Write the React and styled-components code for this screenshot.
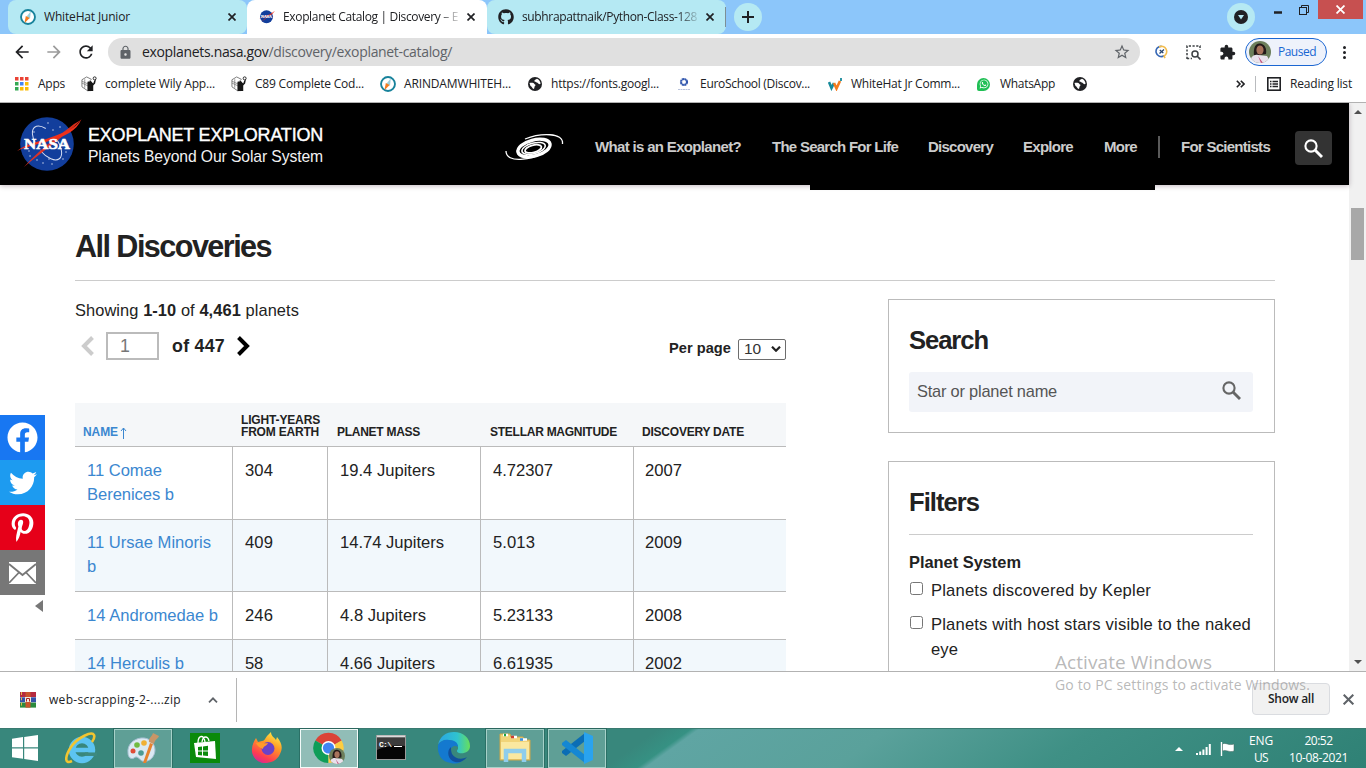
import React, { useLayoutEffect, useRef } from "react";
import styled, { createGlobalStyle, css } from "styled-components";
import { FaGithub, FaFacebook, FaTwitter, FaPinterestP, FaWhatsapp } from "react-icons/fa";
import { MdExtension, MdLock, MdRefresh, MdStarBorder, MdArrowBack, MdArrowForward } from "react-icons/md";

const ui = `"Open Sans", "Noto Sans", sans-serif`;
const arial = `"Liberation Sans", Arial, sans-serif`;

const Global = createGlobalStyle`
  *, *::before, *::after { box-sizing: border-box; }
  html, body { margin: 0; height: 768px; overflow: hidden; background: #fff; }
  h1, h2, h3, p { margin: 0; }
  svg { display: block; flex: none; }
`;

/* Text whose tracking is adjusted so that it spans a given width. */
const FitSpan = styled.span`
  display: inline-block;
  width: max-content;
  white-space: pre;
  flex: none;
`;
function Fit({ w, children }) {
  const ref = useRef(null);
  useLayoutEffect(() => {
    const el = ref.current;
    el.style.letterSpacing = "0px";
    const natural = el.getBoundingClientRect().width;
    const n = el.textContent.length;
    el.style.letterSpacing = `${(w - natural) / n}px`;
  }, [w, children]);
  return <FitSpan ref={ref}>{children}</FitSpan>;
}

const Screen = styled.div`
  width: 1366px;
  height: 768px;
  display: flex;
  flex-direction: column;
  overflow: hidden;
  position: relative;
  font: 12px/16px ${ui};
  color: #202124;
`;

/* ---------- tab strip ---------- */
const TabStrip = styled.div`
  height: 34px;
  flex: none;
  display: flex;
  background: #8cc6fa;
  padding-left: 8px;
`;
const Tab = styled.div`
  width: ${(p) => p.$w}px;
  height: 34px;
  border-radius: 8px 8px ${(p) => (p.$active ? "0 0" : "8px 8px")};
  background: ${(p) => (p.$active ? "#fff" : "#b5e9f3")};
  display: flex;
  align-items: center;
  padding: 0 10px 1px ${(p) => p.$pad || 12}px;
  gap: 8px;
`;
const TabTitle = styled.div`
  width: 176px;
  flex: none;
  overflow: hidden;
  white-space: nowrap;
  ${(p) => p.$fade && css`
    mask-image: linear-gradient(90deg, #000 155px, rgba(0, 0, 0, 0.15) 176px);
  `}
`;
const TabEnd = styled.div`
  width: 1px;
  height: 20px;
  margin: 7px 8px 0 -1px;
  background: #7d8f96;
`;
const RoundButton = styled.div`
  width: 28px;
  height: 28px;
  border-radius: 50%;
  margin-top: 3px;
  background: #b5e9f3;
  display: grid;
  place-items: center;
`;
const WindowButtons = styled.div`
  display: flex;
  margin-left: auto;
  padding-right: 3px;
`;
const WinButton = styled.div`
  width: ${(p) => p.$w}px;
  height: 19px;
  background: ${(p) => (p.$close ? "#c75050" : "transparent")};
  display: flex;
  align-items: center;
  justify-content: center;
  padding-right: ${(p) => p.$inset || 0}px;
`;

/* ---------- toolbar ---------- */
const Toolbar = styled.div`
  height: 36px;
  flex: none;
  display: flex;
  align-items: center;
  padding: 0 15px 0 12px;
  color: #202124;
`;
const NavIcons = styled.div`
  display: flex;
  gap: 12px;
  width: 96px;
`;
const Omnibox = styled.div`
  width: 1032px;
  height: 28px;
  border-radius: 14px;
  background: #e0e0e0;
  display: flex;
  align-items: center;
  padding: 0 9px 0 10px;
  color: #5f6368;
  font-size: 14px;
  b { font-weight: 400; color: #202124; }
`;
const Url = styled.div`
  margin-left: 9px;
  flex: 1;
`;
const Extensions = styled.div`
  display: flex;
  align-items: center;
  gap: 18px;
  margin: 0 9px 0 15px;
`;
const Profile = styled.div`
  width: 82px;
  height: 28px;
  border: 1px solid #1b66d2;
  border-radius: 14px;
  background: #eef2fb;
  display: flex;
  align-items: center;
  gap: 7px;
  padding-left: 3px;
  color: #1967d2;
`;
const Kebab = styled.div`
  margin-left: auto;
  display: flex;
  flex-direction: column;
  gap: 2px;
  padding-right: 5px;
  i { width: 3px; height: 3px; border-radius: 50%; background: #202124; }
`;

/* ---------- bookmarks ---------- */
const Bookmarks = styled.div`
  height: 33px;
  flex: none;
  border-bottom: 1px solid #b2b2b2;
  padding: 0 14px 4px 15px;
  display: flex;
  align-items: center;
`;
const Bookmark = styled.div`
  width: ${(p) => p.$w}px;
  flex: none;
  display: flex;
  align-items: center;
  gap: ${(p) => p.$gap || 8}px;
`;
const ReadingList = styled.div`
  margin-left: auto;
  display: flex;
  align-items: center;
  gap: 8px;
`;
const ReadingLabel = styled.div`
  margin-left: 1px;
`;
const Divider = styled.div`
  width: 1px;
  height: 16px;
  margin: 0 3px 0 2px;
  background: #b9bbbe;
`;

/* ---------- page ---------- */
const Viewport = styled.div`
  height: 568px;
  flex: none;
  display: flex;
  position: relative;
  overflow: hidden;
  font-family: ${arial};
`;
const Page = styled.div`
  width: 1349px;
  color: #222;
`;
const Header = styled.header`
  height: 82px;
  background: #000;
  position: relative;
  display: flex;
  align-items: center;
  padding-left: 16px;
  box-shadow: 0 1px 5px rgba(40, 0, 30, 0.28);
`;
const MenuEdge = styled.div`
  position: absolute;
  left: 810px;
  top: 82px;
  width: 345px;
  height: 5px;
  background: #000;
`;
const BrandLogo = styled.div`
  padding-bottom: 2px;
`;
const Brand = styled.div`
  margin-left: 6px;
  padding-top: 3px;
  width: 417px;
  color: #fff;
`;
const BrandTitle = styled.div`
  font-size: 18px;
  line-height: 21px;
  -webkit-text-stroke: 0.4px #fff;
`;
const BrandSub = styled.div`
  font-size: 15.7px;
  line-height: 21px;
  color: #f2f2f2;
`;
const Nav = styled.nav`
  display: grid;
  grid-template-columns: 177px 156px 95px 81px 54px 23px 114px 37px;
  align-items: center;
  margin-left: 30px;
  padding-top: 6px;
  font: bold 15px/20px ${arial};
  color: #ccc;
`;
const NavLine = styled.div`
  width: 2px;
  height: 22px;
  background: #5a5a5a;
`;
const NavSearch = styled.div`
  height: 34px;
  margin-top: 2px;
  border-radius: 4px;
  background: #333;
  display: grid;
  place-items: center;
`;
const GalaxyMark = styled.div`
  padding-top: 8px;
`;
const Content = styled.main`
  padding: 41px 74px 0 75px;
`;
const Heading = styled.h1`
  font: bold 30.6px/40px ${arial};
  height: 55px;
  border-bottom: 1px solid #ccc;
`;
const Columns = styled.div`
  display: flex;
  justify-content: space-between;
  padding-top: 18px;
`;
const Main = styled.section`
  width: 711px;
`;
const Showing = styled.p`
  font-size: 16.4px;
  line-height: 22px;
`;
const Pager = styled.div`
  display: flex;
  align-items: center;
  height: 30px;
  margin-top: 10px;
  padding-left: 6px;
  font: bold 17.8px/24px ${arial};
`;
const PageInput = styled.div`
  width: 53px;
  height: 28px;
  border: 2px solid #bbb;
  margin: 0 13px 0 12px;
  padding-left: 12px;
  font-weight: 400;
  color: #777;
`;
const NextIcon = styled.div`
  margin-left: 12px;
`;
const PerPage = styled.div`
  margin: 5px 0 0 auto;
  display: flex;
  gap: 7px;
  font-size: 14.6px;
  line-height: 20px;
`;
const Select = styled.div`
  width: 48px;
  height: 21px;
  margin-top: 1px;
  border: 1px solid #6d6d6d;
  border-radius: 2px;
  display: flex;
  align-items: center;
  padding-left: 5px;
  gap: 10px;
  font-weight: 400;
  font-size: 15.5px;
  color: #333;
`;
const Table = styled.div`
  margin-top: 42px;
  display: grid;
  grid-template-columns: 158px 95px 153px 153px 152px;
`;
const HeadCell = styled.div`
  height: 44px;
  padding: 0 0 8px ${(p) => p.$pad || 8}px;
  background: #f5f7f9;
  border-bottom: 1px solid #bbb;
  display: flex;
  flex-direction: column;
  justify-content: flex-end;
  font: bold 12px/12px ${arial};
  color: ${(p) => (p.$sorted ? "#3b87d0" : "#222")};
`;
const Sorted = styled.div`
  display: flex;
  gap: 2px;
  height: 12px;
`;
const Cell = styled.div`
  height: ${(p) => p.$h}px;
  padding: ${(p) => p.$top}px 0 0 ${(p) => p.$pad || 12}px;
  background: ${(p) => (p.$alt ? "#f2f8fc" : "#fff")};
  border-bottom: 1px solid #bbb;
  border-right: ${(p) => (p.$last ? "0" : "1px solid #bbb")};
  color: ${(p) => (p.$link ? "#3b87d0" : "#222")};
  font-size: 16.6px;
  line-height: 24px;
`;
const Aside = styled.aside`
  width: 387px;
`;
const Card = styled.section`
  height: ${(p) => p.$h}px;
  border: 1px solid #bbb;
  padding: 20px 21px 0 20px;
  margin-bottom: 28px;
`;
const CardTitle = styled.h2`
  font: bold 25.6px/40px ${arial};
`;
const SearchField = styled.div`
  margin-top: 12px;
  height: 40px;
  border-radius: 3px;
  background: #f2f4f9;
  display: flex;
  align-items: center;
  justify-content: space-between;
  padding: 0 12px 2px 8px;
  font-size: 16.4px;
  line-height: 24px;
  color: #555;
`;
const SearchIcon = styled.div`
  padding-bottom: 1px;
`;
const FilterGroup = styled.h3`
  border-top: 1px solid #ccc;
  margin-top: 12px;
  padding: 15px 0 1px;
  font: bold 16.4px/24px ${arial};
`;
const FilterRow = styled.div`
  display: flex;
  gap: 8px;
  padding: 3px 0 6px 1px;
  font-size: 16.6px;
  line-height: 25px;
`;
const Checkbox = styled.div`
  width: 13px;
  height: 13px;
  margin-top: 4px;
  border: 1px solid #767676;
  border-radius: 2.5px;
`;
const Lines = styled.div`
  display: flex;
  flex-direction: column;
  align-items: flex-start;
`;
const Share = styled.div`
  position: absolute;
  left: 0;
  top: 312px;
  width: 45px;
  display: flex;
  flex-direction: column;
`;
const ShareButton = styled.div`
  height: 45px;
  background: ${(p) => p.$bg};
  color: #fff;
  display: grid;
  place-items: center;
`;
const ShareToggle = styled.div`
  width: 0;
  margin: 5px 2px 0 auto;
  border: 6px solid transparent;
  border-left-width: 0;
  border-right: 8px solid #777;
`;
const Scrollbar = styled.div`
  width: 17px;
  background: #f1f1f1;
  display: flex;
  flex-direction: column;
  align-items: center;
  padding: 7px 0;
`;
const Arrow = styled.div`
  border: 4px solid transparent;
  border-${(p) => (p.$up ? "bottom" : "top")}-color: #505050;
  border-${(p) => (p.$up ? "top" : "bottom")}-width: 0;
`;
const Thumb = styled.div`
  width: 13px;
  height: 52px;
  margin: 94px 0 auto;
  background: #a8a8a8;
`;

/* ---------- download shelf ---------- */
const Shelf = styled.div`
  height: 57px;
  flex: none;
  border-top: 1px solid #b2b2b2;
  display: flex;
  align-items: center;
  padding: 0 12px 0 20px;
  background: #fff;
`;
const ShelfItem = styled.div`
  width: 217px;
  height: 44px;
  border-right: 1px solid #b5b5b5;
  display: flex;
  align-items: center;
  padding-right: 18px;
`;
const FileName = styled.div`
  margin: 0 auto 0 13px;
`;
const ShowAll = styled.div`
  width: 78px;
  height: 32px;
  margin: -2px 13px 0 auto;
  border: 1px solid #dadce0;
  border-radius: 4px;
  background: #f1f1f1;
  text-align: center;
  line-height: 30px;
  font-weight: 600;
`;
const ShelfClose = styled.div`
  padding-bottom: 2px;
`;
const Watermark = styled.div`
  position: absolute;
  left: 1055px;
  top: 650px;
  color: rgba(140, 140, 140, 0.62);
  font-size: 19px;
  line-height: 24px;
`;
const WatermarkSub = styled.div`
  font-size: 14px;
  line-height: 22px;
`;

/* ---------- taskbar ---------- */
const Taskbar = styled.div`
  height: 40px;
  flex: none;
  display: flex;
  border-top: 1px solid #3a7a70;
  background:
    linear-gradient(144.2deg, #38877c 0 385px, #369183 404px, #5fa5a3 409px, #5aa19b 520px, #3f9085 640px, #2f8175 100%);
`;
const Start = styled.div`
  width: 50px;
  display: grid;
  place-items: center;
  padding-bottom: 2px;
`;
const Task = styled.div`
  width: 58px;
  height: 39px;
  margin: 0 2px;
  padding-bottom: 2px;
  display: grid;
  place-items: center;
  ${(p) => p.$open && css`
    border: 1px solid rgba(190, 225, 218, 0.75);
    box-shadow: 0 0 0 1px rgba(20, 70, 62, 0.35);
    background: rgba(255, 255, 255, ${p.$open === "front" ? 0.45 : 0.2});
  `}
  ${(p) => p.$open === "front" && css`border-color: #f2faf8;`}
`;
const Tray = styled.div`
  margin-left: auto;
  padding-right: 18px;
  display: flex;
  align-items: center;
  color: #fff;
`;
const TrayText = styled.div`
  display: flex;
  flex-direction: column;
  align-items: center;
  margin-left: ${(p) => p.$ml}px;
  line-height: 17px;
`;

/* ---------- drawings ---------- */
const Cross = ({ s = 8, c = "#202124", w = 1.7 }) => (
  <svg width={s} height={s} viewBox="0 0 8 8" stroke={c} strokeWidth={w}><path d="M.5.5l7 7M7.5.5l-7 7" /></svg>
);
const WhiteHat = () => (
  <svg width="16" height="16" viewBox="0 0 17 17">
    <circle cx="8.5" cy="8.5" r="7.4" fill="#fff" stroke="#17829b" strokeWidth="2" />
    <path d="M11.500 2.500 7 8l1.500 2.500 2.200-.8z" fill="#9fd0dc" />
    <path d="M6.200 7.500l4 2L5 15l.3-3z" fill="#f57c1f" />
  </svg>
);
const Meatball = ({ w = 66, h = 56, small }) => (
  <svg width={w} height={h} viewBox="0 0 66 56">
    <circle cx="31" cy="29" r="26.8" fill="#123e9c" />
    {!small && (
      <g>
        <ellipse cx="31" cy="28" rx="10" ry="20" transform="rotate(-38 31 28)" fill="none" stroke="#d5ddf2" strokeWidth="1" strokeDasharray="46 8 30 60" />
        {[[32, 8], [44, 12], [37, 15], [14, 41], [21, 45], [27, 48], [13, 36], [33, 44], [47, 44], [36, 49], [50, 37], [18, 17]].map(([x, y]) => (
          <circle key={`${x}-${y}`} cx={x} cy={y} r=".7" fill="#dfe6f7" />
        ))}
      </g>
    )}
    <path d="M65.500 4C60 17 49 21 33 26 20 30 9 32 1 36c9-7 21-9 32-13C49 17 58 15 65.500 4z" fill="#f0311b" />
    <path d="M65 5C48 22 27 36 8 52c15-17 33-30 50-43z" fill="#f0311b" opacity=".9" />
    <text x="8" y="34" textLength="46" lengthAdjust="spacingAndGlyphs" fill="#fff" stroke="#fff" strokeWidth=".6" fontFamily="Liberation Serif" fontWeight="700" fontSize="15.500">NASA</text>
  </svg>
);
const Galaxy = () => (
  <svg width="60" height="30" viewBox="0 0 60 30" fill="none" stroke="#fff">
    <g transform="rotate(-15 29 15)">
      <ellipse cx="29" cy="15" rx="16.500" ry="8" strokeWidth="3.400" />
      <ellipse cx="28.500" cy="15.300" rx="12" ry="5.300" strokeWidth="1.500" />
      <ellipse cx="28" cy="15.600" rx="8.500" ry="3.600" strokeWidth="1.800" />
    </g>
    <path d="M1 18c0 13 26 9 39 1" strokeWidth="1.300" />
    <path d="M20 6C35 0 59-1 57.500 11" strokeWidth="1.300" />
  </svg>
);
const Cubes = () => (
  <svg width="16" height="16" viewBox="0 0 17 17">
    <path d="M1 4l5-3 5 2.500-3.500 3.500v9L1 11.500z" fill="#fff" stroke="#777" />
    <path d="M1 7.500l6.500 3M1 5.500l6.500 3M4 3.500v9" stroke="#777" strokeWidth=".8" />
    <path d="M8 8l2-3 3 3 1-3 2-2-1 5-2 2v6H8z" fill="#161616" />
    <path d="M7 6h4v10H7z" fill="#161616" />
    <circle cx="14.500" cy="2.500" r="1.600" fill="none" stroke="#222" />
  </svg>
);
const Globe = () => (
  <svg width="14" height="14" viewBox="0 0 14 14">
    <circle cx="7" cy="7" r="7" fill="#202124" />
    <path d="M1.500 6c2-.5 4.500-.3 5 1.300 1.300.2 1.200 1.500.2 1.900L6 12C4 11.500 4 9.500 2.500 9zM9 1.800C7 3 6 3.300 6.500 4.500c1.500 0 1.500 1 3 1.300.8.700 1.500 1.700 3 1.200C12.500 4.500 11 2.500 9 1.800z" fill="#fff" />
  </svg>
);
const Apps = () => (
  <svg width="14" height="14" viewBox="0 0 14 14">
    {["#ea4335", "#ea4335", "#ea4335", "#34a853", "#4285f4", "#fbbc04", "#34a853", "#fbbc04", "#fbbc04"].map((c, i) => (
      <rect key={i} x={(i % 3) * 5} y={Math.floor(i / 3) * 5} width="3.500" height="3.500" fill={c} />
    ))}
  </svg>
);
const Euro = () => (
  <svg width="14" height="14" viewBox="0 0 14 14">
    <circle cx="7" cy="5" r="3" fill="none" stroke="#2f55ad" strokeWidth="2.200" strokeDasharray="2 .35" />
    <path d="M1 12.500h12" stroke="#b9c3dc" strokeDasharray="2 .5" />
  </svg>
);
const WLogo = () => (
  <svg width="15" height="14" viewBox="0 0 15 14" fill="none" strokeWidth="2.600">
    <path d="M1 5l2.500 6L6 6" stroke="#178a9b" /><path d="M6 6l2.500 5.500L12 4" stroke="#f57c1f" /><path d="M13 1v3" stroke="#178a9b" strokeWidth="1.800" />
  </svg>
);
const WhatsApp = styled.div`
  width: 13px;
  height: 13px;
  border-radius: 50% 50% 50% 15%;
  background: #20bf55;
  color: #fff;
  display: grid;
  place-items: center;
`;
const Compass = () => (
  <svg width="13" height="14" viewBox="0 0 13 14" fill="none">
    <path d="M6.500 1.200a5.200 5.200 0 1 0 2.500 9.600" stroke="#3667b5" strokeWidth="1.600" />
    <path d="M4 2a5.200 5.200 0 1 1 5 9.200l1 2" stroke="#f3bd4e" strokeWidth="1.600" />
    <path d="M4.500 8.500l4.500-4M4.800 5l3.500 3" stroke="#27446e" strokeWidth="1.300" />
  </svg>
);
const Capture = () => (
  <svg width="15" height="15" viewBox="0 0 15 15" fill="none" stroke="#3c4043">
    <path d="M1 14V1h13v4M1 13.500h5" strokeWidth="1.500" strokeDasharray="2.200 1.500" />
    <circle cx="9" cy="9" r="3" strokeWidth="1.500" /><path d="M11 11l3.500 3.500" strokeWidth="1.700" />
  </svg>
);
const Portrait = ({ s = 22 }) => (
  <svg width={s} height={s} viewBox="0 0 22 22">
    <clipPath id={`face${s}`}><circle cx="11" cy="11" r="11" /></clipPath>
    <g clipPath={`url(#face${s})`}>
      <rect width="22" height="22" fill="#6d7f5c" />
      <path d="M5 15C4 6 7 2 11 2.500s7 4 6 10.500z" fill="#241a1a" />
      <ellipse cx="11" cy="9" rx="3.600" ry="4.600" fill="#a8735c" />
      <path d="M1 22c0-6 4-9 8-8l9 1 4 7z" fill="#e9e1ec" />
      <path d="M9 15l5 7h-2z" fill="#c3547c" />
    </g>
  </svg>
);
const ListIcon = () => (
  <svg width="14" height="14" viewBox="0 0 14 14" fill="none" stroke="#202124">
    <rect x=".8" y=".8" width="12.400" height="12.400" strokeWidth="1.600" />
    <path d="M3 4.500h1.500M3 7h1.500M3 9.500h1.500M5.500 4.500h5.500M5.500 7h5.500M5.500 9.500h5.500" strokeWidth="1.300" />
  </svg>
);
const Chevron = ({ left, c }) => (
  <svg width="13" height="20" viewBox="0 0 13 20" fill="none" stroke={c} strokeWidth="4">
    <path d={left ? "M11.500 1.500 3 10l8.500 8.500" : "M1.500 1.500 10 10l-8.500 8.500"} />
  </svg>
);
const Lens = ({ s = 19, c = "#666" }) => (
  <svg width={s} height={s} viewBox="0 0 19 19" fill="none" stroke={c}>
    <circle cx="7" cy="7" r="5.600" strokeWidth="2.100" /><path d="M11 11l7 7" strokeWidth="2.900" />
  </svg>
);
const Mail = () => (
  <svg width="27" height="22" viewBox="0 0 27 22">
    <rect width="27" height="22" fill="#fff" />
    <path d="M0 2l13.500 11L27 2M0 21l9.500-10M27 21l-9.500-10" fill="none" stroke="#777" strokeWidth="1.800" />
  </svg>
);
const Rar = () => (
  <svg width="16" height="16" viewBox="0 0 16 16">
    <rect width="16" height="5" fill="#b52a3f" /><rect y="5.300" width="16" height="5" fill="#3451a8" /><rect y="10.600" width="16" height="5" fill="#2c8b3d" />
    <rect x="5.500" width="5" height="15.600" fill="#c9542b" /><rect x="5" y="5" width="6" height="5" fill="#f3e9dc" />
    <path d="M6.500 9.500V6.500h3v3" stroke="#a22" fill="none" /><path d="M1.500 0v15.600" stroke="#e5b646" strokeDasharray="3 2.300" />
  </svg>
);
const WinLogo = () => (
  <svg width="28" height="26" viewBox="0 0 28 26" fill="#fff">
    <path d="M1 3.700l11-1.600v10.200H1zM13.200 2 27 0v12.300H13.200zM1 13.500h11v10.300L1 22.200zM13.200 13.500H27V26l-13.800-2z" />
  </svg>
);
const IE = () => (
  <svg width="32" height="32" viewBox="0 0 32 32" fill="none">
    <circle cx="17" cy="18" r="10" stroke="#5cc4f2" strokeWidth="6.500" />
    <path d="M10 18h20" stroke="#5cc4f2" strokeWidth="4.500" /><path d="M20 22.200h12" stroke="#3d8a7f" strokeWidth="3.500" />
    <path d="M7 29C-1 33 0 24 6 15 13 5 27-1 29 3c.8 2-.5 5-2 7" stroke="#f2c530" strokeWidth="2.600" />
  </svg>
);
const Paint = () => (
  <svg width="32" height="32" viewBox="0 0 32 32">
    <path d="M14 6C6 7 0 13 1 21c0 4 3 7 6 5 3-3 5 1 8 3 8 2 13-5 13-11S23 5 14 6z" fill="#dbe9f3" stroke="#a5bfd1" />
    <circle cx="6" cy="19" r="2.500" fill="#e04c36" /><circle cx="10" cy="13" r="2.800" fill="#71bb41" /><circle cx="17" cy="11" r="2.800" fill="#f0b035" /><circle cx="14" cy="21" r="2.800" fill="#4d9b94" />
    <path d="M16 31l7-20 3 1-7 19z" fill="#e7832e" /><path d="M22 10c-1-4 3-5 4-9l6 3c-1 3-4 3-5 8z" fill="#c99667" />
  </svg>
);
const Store = () => (
  <svg width="30" height="30" viewBox="0 0 30 30">
    <rect width="30" height="30" fill="#0a8a0a" />
    <path d="M4 10l21-2 1 18-20-2z" fill="#fff" /><path d="M8 10c0-8 6-9 7-1M12 9c1-7 6-6 7-1" fill="none" stroke="#fff" strokeWidth="1.300" />
    <path d="M8 14l4-.5v4H8zM13 13.400l5-.6v4.700h-5zM8 18.500h4v4L8 22zM13 18.500h5V23l-5-.6z" fill="#0a8a0a" />
  </svg>
);
const Firefox = () => (
  <svg width="32" height="32" viewBox="0 0 32 32">
    <defs><linearGradient id="fx" x1=".8" y1="0" x2=".3" y2="1"><stop offset="0" stopColor="#fff14a" /><stop offset=".4" stopColor="#ff9a25" /><stop offset=".8" stopColor="#ff3d50" /><stop offset="1" stopColor="#d92a90" /></linearGradient></defs>
    <path d="M5 6l2 4 4-1c2 0 3-2 5-5l4-4c0 4 3 5 5 8l1-3c5 6 6 11 3 17-3 7-10 9-15 9C6 31 0 24 1 17c0-4 2-8 4-11z" fill="url(#fx)" />
    <circle cx="17" cy="16.500" r="6.500" fill="#6b42c8" /><path d="M5 11c5-1 8 1 12 0-1 3-5 3-5 6-3-1-6-3-7-6z" fill="#ff9b2b" />
  </svg>
);
const Chrome = () => (
  <svg width="33" height="32" viewBox="0 0 33 32">
    <path d="M15.500 16 2.300 8.500A15 15 0 0 1 28.600 8.500z" fill="#db4437" /><path d="M15.500 16 15.500 31A15 15 0 0 1 2.300 8.500z" fill="#0f9d58" /><path d="M15.500 16 28.600 8.500A15 15 0 0 1 15.500 31z" fill="#ffcd40" />
    <circle cx="15.500" cy="16" r="7" fill="#fff" /><circle cx="15.500" cy="16" r="5.600" fill="#4285f4" />
    <g transform="translate(16 16)"><Portrait s={16} /></g>
  </svg>
);
const Cmd = () => (
  <svg width="30" height="25" viewBox="0 0 30 25">
    <rect x=".5" y=".5" width="29" height="24" fill="#050505" stroke="#9a9a9a" /><path d="M1 3h28v8Q14 9 1 15z" fill="#3c3c3c" /><path d="M1 1.500h28" stroke="#dcdcdc" strokeWidth="2" />
    <text x="3" y="12" fontFamily="Liberation Mono" fontSize="8" fontWeight="700" fill="#fff" textLength="13">C:\</text><path d="M18 11.500h8" stroke="#fff" />
  </svg>
);
const Edge = () => (
  <svg width="33" height="33" viewBox="0 0 33 33">
    <defs><linearGradient id="eg"><stop offset="0" stopColor="#2aa5e3" /><stop offset=".6" stopColor="#2fc3cf" /><stop offset="1" stopColor="#67df5c" /></linearGradient></defs>
    <path d="M1 14C3 5 9 1 17 1c9 0 16 6 16 14 0 6-6 8-11 7-3-1-2-3-1-4 1-5-4-9-10-9-5 0-9 2-10 5z" fill="url(#eg)" />
    <path d="M1 14c2-4 7-6 11-5 6 0 9 3 9 7-2-2-8-1-8 5 0 6 7 10 12 9-4 3-8 3-11 2C5 31 0 24 1 14z" fill="#1479cf" />
    <path d="M14 16c-5 4-3 13 4 15 5 1 9-1 12-5-5 3-12 2-15-3-1-2-1-5-1-7z" fill="#11509d" />
  </svg>
);
const Explorer = () => (
  <svg width="32" height="30" viewBox="0 0 32 30">
    <path d="M1 1h10l1 3h12l1 3h6v20H1z" fill="#f1d479" stroke="#cfa74b" /><path d="M4 2h5M12 4h6M21 6.500h7" stroke="#fff" strokeWidth="2.600" />
    <path d="M5 2h2" stroke="#1ba345" strokeWidth="2.600" /><path d="M12 4h3" stroke="#cf4031" strokeWidth="2.600" /><path d="M21 6.500h3" stroke="#3e92dd" strokeWidth="2.600" />
    <path d="M2 9h28v17H2z" fill="#fae8a0" /><path d="M7 29V18h18v11" fill="none" stroke="#8fcdec" strokeWidth="4.500" />
  </svg>
);
const Code = () => (
  <svg width="32" height="32" viewBox="0 0 32 32">
    <path d="M24 1v8L5 24l-4-3v-2z" fill="#0b6db5" /><path d="M24 31v-8L5 8 1 11v2z" fill="#1587d3" /><path d="M23 0l9 4v24l-9 4z" fill="#2aa3ee" />
  </svg>
);
const Signal = () => (
  <svg width="15" height="13" viewBox="0 0 15 13" stroke="#fff" strokeWidth="2"><path d="M1 13v-2M4.200 13V9.500M7.400 13V7.500M10.600 13V5M13.800 13V2" /></svg>
);
const Flag = () => (
  <svg width="15" height="14" viewBox="0 0 15 14"><path d="M1.500 0v14" stroke="#fff" strokeWidth="1.400" /><path d="M2.500 2C6 0 8 4 14 2v7c-5 2-8-2-11.500 0z" fill="#fff" stroke="#45655f" strokeWidth=".5" /></svg>
);
const Caret = ({ w = 10, c = "#5f6368", down, sw = 1.7 }) => (
  <svg width={w} height={w * 0.6} viewBox="0 0 10 6" fill="none" stroke={c} strokeWidth={sw}><path d={down ? "M1 .7 5 4.700 9 .7" : "M1 5.300 5 1.300 9 5.300"} /></svg>
);

const bookmarks = [
  [<Apps />, "Apps", 27, 66, 9],
  [<Cubes />, "complete Wily App...", 110, 150],
  [<Cubes />, "C89 Complete Cod...", 109, 149],
  [<WhiteHat />, "ARINDAMWHITEH...", 107, 148],
  [<Globe />, "https://fonts.googl...", 108, 149, 9],
  [<Euro />, "EuroSchool (Discov...", 110, 151, 9],
  [<WLogo />, "WhiteHat Jr Comm...", 109, 149],
];
const rows = [
  { h: 73, top: 12, name: [["11 Comae", 75], ["Berenices b", 87]], cells: [["304", 28], ["19.4 Jupiters", 95], ["4.72307", 60], ["2007", 37]] },
  { h: 72, top: 11, name: [["11 Ursae Minoris", 124], ["b", 9]], cells: [["409", 28], ["14.74 Jupiters", 104], ["5.013", 42], ["2009", 37]] },
  { h: 48, top: 12, name: [["14 Andromedae b", 131]], cells: [["246", 28], ["4.8 Jupiters", 86], ["5.23133", 60], ["2008", 37]] },
  { h: 49, top: 12, name: [["14 Herculis b", 97]], cells: [["58", 18], ["4.66 Jupiters", 95], ["6.61935", 60], ["2002", 37]] },
];

export default function App() {
  return (
    <Screen>
      <Global />
      <TabStrip>
        <Tab $w={239}><WhiteHat /><TabTitle><Fit w={86}>WhiteHat Junior</Fit></TabTitle><Cross /></Tab>
        <Tab $active $w={240}><Meatball small w={16} h={15} /><TabTitle $fade><Fit w={175}>Exoplanet Catalog | Discovery – E</Fit></TabTitle><Cross /></Tab>
        <Tab $w={239} $pad={11}><FaGithub size={16} /><TabTitle $fade><Fit w={175}>subhrapattnaik/Python-Class-128</Fit></TabTitle><Cross /></Tab>
        <TabEnd />
        <RoundButton><svg width="12" height="12" viewBox="0 0 12 12" stroke="#202124" strokeWidth="2"><path d="M6 0v12M0 6h12" /></svg></RoundButton>
        <WindowButtons>
          <RoundButton><svg width="14" height="14" viewBox="0 0 14 14"><circle cx="7" cy="7" r="7" fill="#202124" /><path d="M4 5h6L7 9.500z" fill="#b5e9f3" /></svg></RoundButton>
          <WinButton $w={46}><svg width="8" height="8"><path d="M0 6.500h8" stroke="#202124" strokeWidth="2.500" /></svg></WinButton>
          <WinButton $w={17} $inset={11}><svg width="10" height="10" viewBox="0 0 10 10" fill="none" stroke="#202124"><rect x=".5" y="2.500" width="7" height="7" /><path d="M2.500 2V.5h7v7H8" /></svg></WinButton>
          <WinButton $w={45} $close><Cross s={9} c="#fff" w={1.6} /></WinButton>
        </WindowButtons>
      </TabStrip>

      <Toolbar>
        <NavIcons><MdArrowBack size={20} /><MdArrowForward size={20} color="#9b9b9b" /><MdRefresh size={20} /></NavIcons>
        <Omnibox>
          <MdLock size={15} />
          <Url><Fit w={310}><b>exoplanets.nasa.gov</b>/discovery/exoplanet-catalog/</Fit></Url>
          <MdStarBorder size={18} />
        </Omnibox>
        <Extensions><Compass /><Capture /><MdExtension size={17} /></Extensions>
        <Profile><Portrait /><Fit w={38}>Paused</Fit></Profile>
        <Kebab><i /><i /><i /></Kebab>
      </Toolbar>

      <Bookmarks>
        {bookmarks.map(([icon, text, tw, w, gap]) => (
          <Bookmark key={text} $w={w} $gap={gap}>{icon}<Fit w={tw}>{text}</Fit></Bookmark>
        ))}
        <Bookmark $w={96} $gap={10}><WhatsApp><FaWhatsapp size={10} /></WhatsApp><Fit w={55}>WhatsApp</Fit></Bookmark>
        <Globe />
        <ReadingList>
          <svg width="9" height="8" viewBox="0 0 9 8" fill="none" stroke="#202124" strokeWidth="1.600"><path d="M.8.8 4 4 .8 7.200M4.800.8 8 4 4.800 7.200" /></svg>
          <Divider /><ListIcon /><ReadingLabel><Fit w={62}>Reading list</Fit></ReadingLabel>
        </ReadingList>
      </Bookmarks>

      <Viewport>
        <Page>
          <Header>
            <BrandLogo><Meatball /></BrandLogo>
            <Brand>
              <BrandTitle><Fit w={235}>EXOPLANET EXPLORATION</Fit></BrandTitle>
              <BrandSub><Fit w={235}>Planets Beyond Our Solar System</Fit></BrandSub>
            </Brand>
            <GalaxyMark><Galaxy /></GalaxyMark>
            <Nav>
              <Fit w={146}>What is an Exoplanet?</Fit>
              <Fit w={126}>The Search For Life</Fit>
              <Fit w={65}>Discovery</Fit>
              <Fit w={50}>Explore</Fit>
              <Fit w={33}>More</Fit>
              <NavLine />
              <Fit w={89}>For Scientists</Fit>
              <NavSearch><Lens c="#fff" /></NavSearch>
            </Nav>
            <MenuEdge />
          </Header>
          <Content>
            <Heading><Fit w={196}>All Discoveries</Fit></Heading>
            <Columns>
              <Main>
                <Showing><Fit w={224}>Showing <b>1-10</b> of <b>4,461</b> planets</Fit></Showing>
                <Pager>
                  <Chevron left c="#ccc" />
                  <PageInput>1</PageInput>
                  <Fit w={53}>of 447</Fit>
                  <NextIcon><Chevron c="#000" /></NextIcon>
                  <PerPage>
                    <Fit w={62}>Per page</Fit>
                    <Select><Fit w={17}>10</Fit><Caret down c="#222" sw={2.2} /></Select>
                  </PerPage>
                </Pager>
                <Table>
                  <HeadCell $sorted><Sorted><Fit w={35}>NAME</Fit><svg width="7" height="13" viewBox="0 0 7 13" fill="none" stroke="#3b87d0"><path d="M3.500 13V2M1 5l2.500-3L6 5" /></svg></Sorted></HeadCell>
                  <HeadCell><Fit w={79}>LIGHT-YEARS</Fit><Fit w={78}>FROM EARTH</Fit></HeadCell>
                  <HeadCell $pad={9}><Fit w={83}>PLANET MASS</Fit></HeadCell>
                  <HeadCell $pad={9}><Fit w={127}>STELLAR MAGNITUDE</Fit></HeadCell>
                  <HeadCell><Fit w={102}>DISCOVERY DATE</Fit></HeadCell>
                  {rows.map((r, i) => (
                    <React.Fragment key={r.name[0][0]}>
                      <Cell $h={r.h} $top={r.top} $alt={i % 2} $link>
                        <Lines>{r.name.map(([t, w]) => <Fit key={t} w={w}>{t}</Fit>)}</Lines>
                      </Cell>
                      {r.cells.map(([t, w], k) => (
                        <Cell key={t} $h={r.h} $top={r.top} $alt={i % 2} $last={k === 3} $pad={k === 3 ? 11 : 12}><Fit w={w}>{t}</Fit></Cell>
                      ))}
                    </React.Fragment>
                  ))}
                </Table>
              </Main>
              <Aside>
                <Card $h={134}>
                  <CardTitle><Fit w={79}>Search</Fit></CardTitle>
                  <SearchField><Fit w={140}>Star or planet name</Fit><SearchIcon><Lens /></SearchIcon></SearchField>
                </Card>
                <Card $h={400}>
                  <CardTitle><Fit w={70}>Filters</Fit></CardTitle>
                  <FilterGroup><Fit w={112}>Planet System</Fit></FilterGroup>
                  <FilterRow><Checkbox /><Fit w={220}>Planets discovered by Kepler</Fit></FilterRow>
                  <FilterRow><Checkbox /><Lines><Fit w={320}>Planets with host stars visible to the naked</Fit><Fit w={27}>eye</Fit></Lines></FilterRow>
                </Card>
              </Aside>
            </Columns>
          </Content>
        </Page>
        <Scrollbar><Arrow $up /><Thumb /><Arrow /></Scrollbar>
        <Share>
          <ShareButton $bg="#1877f2"><FaFacebook size={31} /></ShareButton>
          <ShareButton $bg="#1d9bf0"><FaTwitter size={28} /></ShareButton>
          <ShareButton $bg="#e60019"><FaPinterestP size={29} /></ShareButton>
          <ShareButton $bg="#777"><Mail /></ShareButton>
          <ShareToggle />
        </Share>
      </Viewport>

      <Shelf>
        <ShelfItem>
          <Rar /><FileName><Fit w={132}>web-scrapping-2-....zip</Fit></FileName><Caret />
        </ShelfItem>
        <ShowAll><Fit w={46}>Show all</Fit></ShowAll>
        <ShelfClose><Cross s={11} c="#5f6368" w={1.5} /></ShelfClose>
      </Shelf>

      <Taskbar>
        <Start><WinLogo /></Start>
        <Task><IE /></Task>
        <Task $open="back"><Paint /></Task>
        <Task><Store /></Task>
        <Task><Firefox /></Task>
        <Task $open="front"><Chrome /></Task>
        <Task><Cmd /></Task>
        <Task><Edge /></Task>
        <Task $open="back"><Explorer /></Task>
        <Task $open="back"><Code /></Task>
        <Tray>
          <svg width="8" height="4" viewBox="0 0 8 4"><path d="M4 0l4 4H0z" fill="#fff" /></svg>
          <TrayText $ml={13}><Signal /></TrayText>
          <TrayText $ml={9}><Flag /></TrayText>
          <TrayText $ml={14}><Fit w={24}>ENG</Fit><Fit w={14}>US</Fit></TrayText>
          <TrayText $ml={16}><Fit w={28}>20:52</Fit><Fit w={59}>10-08-2021</Fit></TrayText>
        </Tray>
      </Taskbar>

      <Watermark>
        <Fit w={157}>Activate Windows</Fit>
        <WatermarkSub><Fit w={255}>Go to PC settings to activate Windows.</Fit></WatermarkSub>
      </Watermark>
    </Screen>
  );
}
